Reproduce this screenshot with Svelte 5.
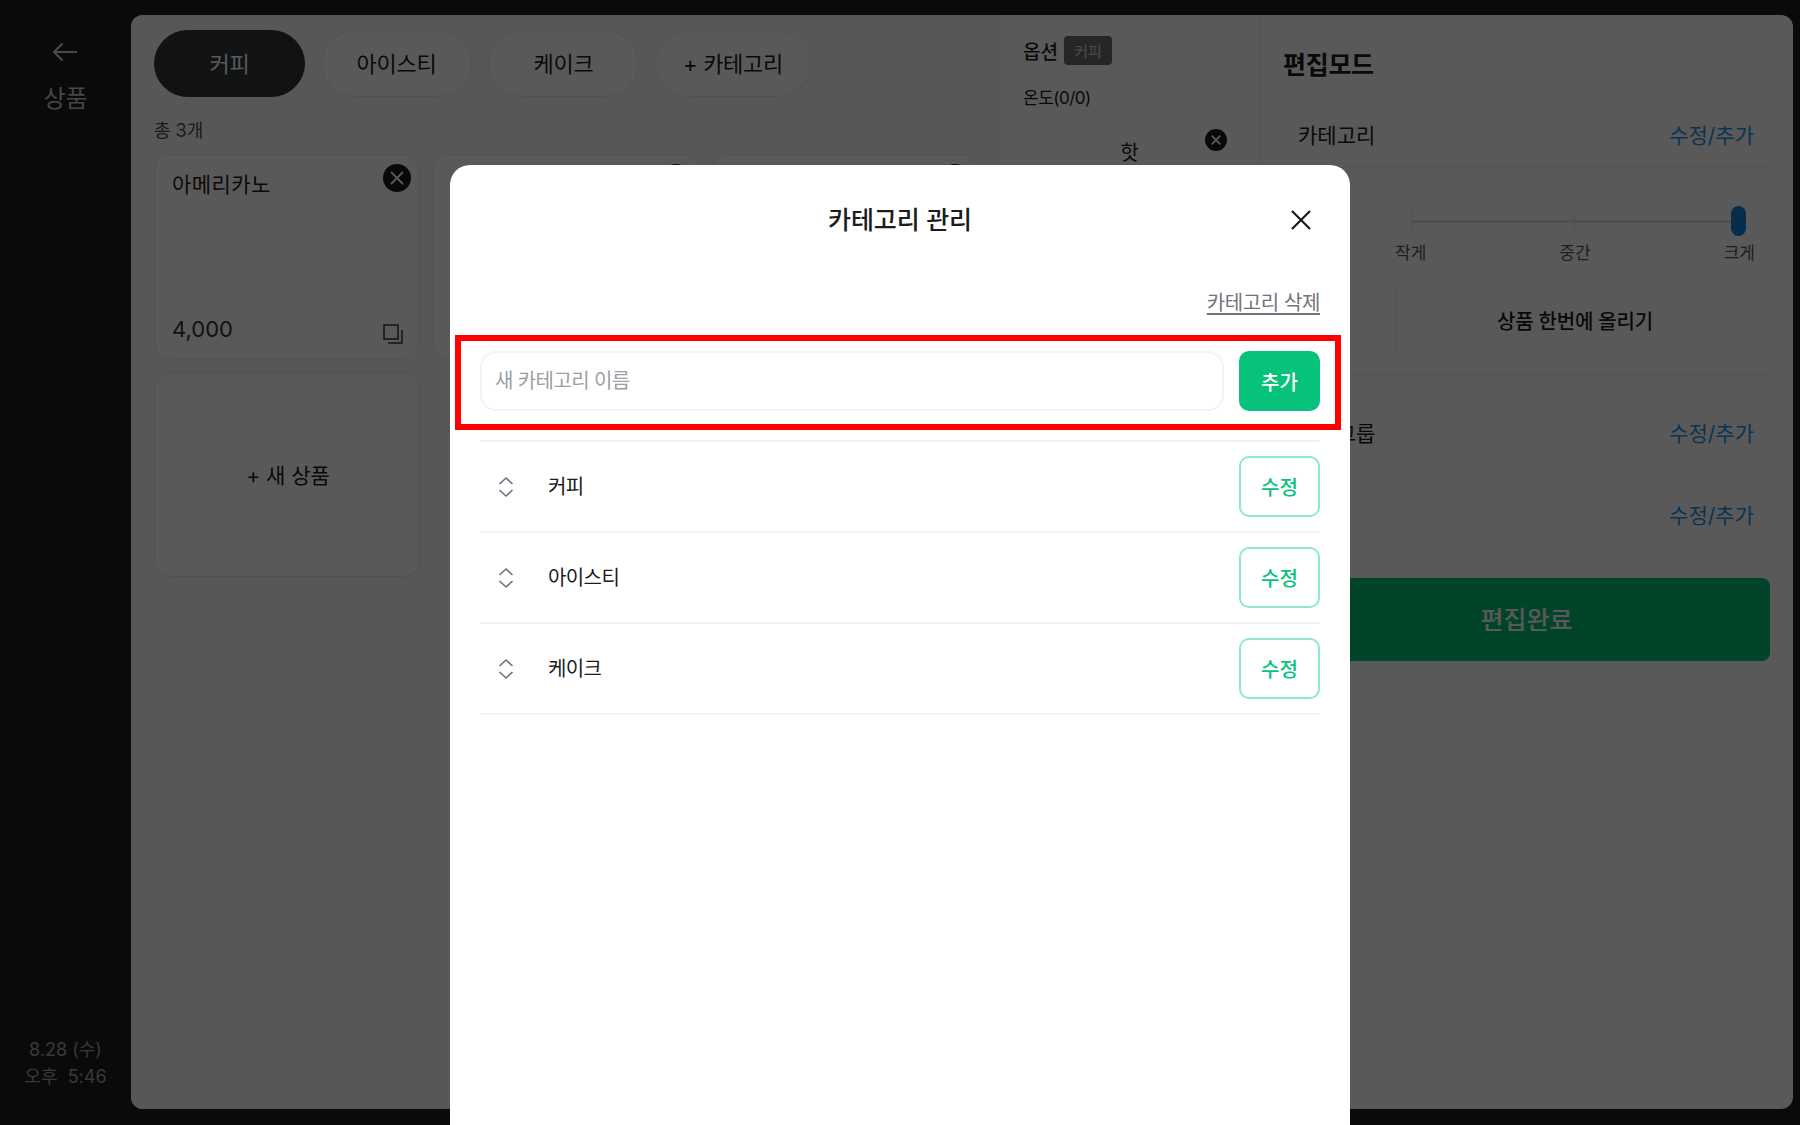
<script>
  const tabs = ['커피', '아이스티', '케이크', '+ 카테고리'];
  const categories = ['커피', '아이스티', '케이크'];
  const peeks = [0, 1, 2];
</script>

<div class="screen">
  <aside class="sidebar">
    <div class="side-top">
      <svg class="back" width="26" height="20" viewBox="0 0 26 20" fill="none" stroke="currentColor" stroke-width="2">
        <path d="M25 10H2M10.5 1.5 2 10l8.500 8.500" />
      </svg>
      <span class="side-title">상품</span>
    </div>
    <div class="clock">
      <span>8.28 (수)</span>
      <span>오후&nbsp; 5:46</span>
    </div>
  </aside>

  <main class="panel">
    <section class="products">
      <div class="tabs">
        {#each tabs as tab, i}
          <button class="tab" class:active={i === 0}>{tab}</button>
        {/each}
      </div>
      <p class="count">총 3개</p>
      <div class="grid">
        {#each peeks as p}
          <div class="card">
            <div class="card-name">{p === 0 ? '아메리카노' : ''}</div>
            <span class="remove">
              <svg width="16" height="16" viewBox="0 0 16 16" stroke="currentColor" stroke-width="1.800"><path d="M2 2l12 12M14 2 2 14" /></svg>
            </span>
            <div class="card-foot">
              <span>{p === 0 ? '4,000' : ''}</span>
              <svg width="22" height="22" viewBox="0 0 22 22" fill="none" stroke="currentColor" stroke-width="1.500">
                <path d="M2 2h14v14H2z" /><path d="M20 7v13H6" />
              </svg>
            </div>
          </div>
        {/each}
        <div class="card new-card">+ 새 상품</div>
      </div>
    </section>

    <section class="options">
      <div class="opt-head">
        <span>옵션</span><span class="tag">커피</span>
      </div>
      <p class="opt-sub">온도(0/0)</p>
      <div class="opt-item">
        <span>핫</span>
        <span class="remove small">
          <svg width="12" height="12" viewBox="0 0 14 14" stroke="currentColor" stroke-width="2"><path d="M2 2l10 10M12 2 2 12" /></svg>
        </span>
      </div>
    </section>

    <section class="edit">
      <h2>편집모드</h2>
      <div class="edit-row first"><span>카테고리</span><span class="link">수정/추가</span></div>
      <div class="size-box">
        <div class="slider">
          <i class="tick"></i><i class="tick"></i><i class="tick end"></i>
          <b class="thumb"></b>
        </div>
        <div class="size-labels"><span>작게</span><span>중간</span><span>크게</span></div>
        <div class="bulk">상품 한번에 올리기</div>
      </div>
      <div class="edit-row group"><span>옵션그룹</span><span class="link">수정/추가</span></div>
      <div class="edit-row"><span>옵션</span><span class="link">수정/추가</span></div>
      <button class="done">편집완료</button>
    </section>
  </main>

  <div class="overlay"></div>

  <div class="modal">
    <header class="modal-head">
      <h1>카테고리 관리</h1>
      <svg class="close" width="22" height="22" viewBox="0 0 22 22" stroke="#1a1a1a" stroke-width="2.200"><path d="M2 2l18 18M20 2 2 20" /></svg>
    </header>
    <div class="delete-row"><a href="#top">카테고리 삭제</a></div>
    <div class="highlight">
      <div class="add-row">
        <div class="name-input">새 카테고리 이름</div>
        <button class="btn solid">추가</button>
      </div>
    </div>
    <ul class="cat-list">
      {#each categories as cat}
        <li>
          <svg width="16" height="22" viewBox="0 0 16 22" fill="none" stroke="#6b7280" stroke-width="1.600">
            <path d="M1.500 8 8 2l6.500 6M1.500 14 8 20l6.500-6" />
          </svg>
          <span class="cat-name">{cat}</span>
          <button class="btn outline">수정</button>
        </li>
      {/each}
    </ul>
  </div>
</div>

<style>
  :global(body) {
    margin: 0;
    background: #1d1d1d;
  }

  .screen {
    position: relative;
    display: flex;
    width: 1800px;
    height: 1125px;
    overflow: hidden;
    background: #1d1d1d;
    font-family: Inter, "Noto Sans CJK KR", "Noto Sans", sans-serif;
    color: #1a1c20;
  }

  button {
    font-family: inherit;
  }

  .sidebar {
    width: 131px;
    flex: none;
    display: flex;
    flex-direction: column;
    justify-content: space-between;
    align-items: center;
    padding: 42px 0 35px;
    box-sizing: border-box;
    color: #d4d4d4;
  }

  .side-top {
    display: flex;
    flex-direction: column;
    align-items: center;
    gap: 19px;
  }

  .side-title {
    font-size: 24px;
    line-height: 36px;
    color: #c8c8c8;
  }

  .clock {
    display: flex;
    flex-direction: column;
    align-items: center;
    font-size: 18px;
    line-height: 27px;
    color: #a3a3a3;
  }

  .panel {
    display: flex;
    width: 1662px;
    height: 1094px;
    margin-top: 15px;
    background: #fff;
    border-radius: 12px;
    overflow: hidden;
  }

  .products {
    width: 868px;
    flex: none;
    box-sizing: border-box;
    padding: 15px 23px;
    background: #fafafa;
  }

  .tabs {
    display: flex;
    gap: 16px;
  }

  .tab {
    height: 67px;
    min-width: 151px;
    padding: 0 27px 3px;
    border: 1px solid #e9e9ea;
    border-radius: 34px;
    background: #fff;
    font-size: 22px;
    font-weight: 400;
    letter-spacing: -0.3px;
    color: #1a1c20;
  }

  .tab.active {
    background: #313438;
    border-color: #313438;
    color: #fff;
  }

  .count {
    margin: 20px 0 9px;
    font-size: 18px;
    line-height: 28px;
    color: #4a4d52;
  }

  .grid {
    display: grid;
    grid-template-columns: repeat(3, 266px);
    grid-auto-rows: 205px;
    gap: 13px;
  }

  .card {
    position: relative;
    display: flex;
    flex-direction: column;
    justify-content: space-between;
    box-sizing: border-box;
    padding: 14px 15px 13px 17px;
    background: #fff;
    border: 1px solid #e9e9ea;
    border-radius: 16px;
  }

  .card-name {
    font-size: 21px;
    line-height: 32px;
    letter-spacing: 0.4px;
  }

  .card-foot {
    display: flex;
    justify-content: space-between;
    align-items: flex-end;
    height: 32px;
    font-size: 22px;
    line-height: 32px;
    color: #33363b;
  }

  .remove {
    position: absolute;
    top: 9px;
    right: 8px;
    width: 28px;
    height: 28px;
    display: flex;
    align-items: center;
    justify-content: center;
    border-radius: 50%;
    background: #1a1a1a;
    color: #fff;
  }

  .new-card {
    align-items: center;
    justify-content: center;
    padding-bottom: 16px;
    font-size: 21px;
  }

  .options {
    width: 261px;
    flex: none;
    box-sizing: border-box;
    padding: 21px 23px;
    background: #fff;
    border-left: 1px solid #efefef;
    border-right: 1px solid #efefef;
  }

  .opt-head {
    display: flex;
    align-items: center;
    gap: 6px;
    font-size: 19px;
    font-weight: 500;
  }

  .tag {
    display: flex;
    align-items: center;
    justify-content: center;
    width: 48px;
    height: 29px;
    border-radius: 4px;
    background: #6a6d73;
    color: #d4d4d4;
    font-size: 15px;
    font-weight: 400;
  }

  .opt-sub {
    margin: 20px 0 0;
    font-size: 17px;
    line-height: 26px;
    letter-spacing: -0.5px;
  }

  .opt-item {
    position: relative;
    margin-top: 26px;
    text-align: center;
    font-size: 20px;
    line-height: 32px;
  }

  .remove.small {
    top: -8px;
    right: 9px;
    width: 22px;
    height: 22px;
  }

  .edit {
    flex: 1;
    min-width: 0;
    box-sizing: border-box;
    padding: 33px 23px 0 23px;
  }

  .edit h2 {
    margin: 0;
    height: 52px;
    font-size: 25px;
    line-height: 34px;
    font-weight: 700;
    letter-spacing: -0.3px;
    border-bottom: 1px solid #f3f3f3;
  }

  .edit-row {
    display: flex;
    justify-content: space-between;
    align-items: center;
    height: 66px;
    padding: 0 16px 0 15px;
    font-size: 21px;
    border-bottom: 1px solid #f0f0f0;
    margin-top: 15px;
  }

  .edit-row.first {
    margin-top: 0;
  }

  .edit-row.group {
    margin-top: 23px;
  }

  .link {
    color: #1e94e8;
  }

  .size-box {
    margin-top: 15px;
    padding: 23px 15px 20px 112px;
    border-bottom: 1px solid #f0f0f0;
  }

  .slider {
    position: relative;
    display: flex;
    justify-content: space-between;
    align-items: center;
    height: 30px;
    margin: 0 17px 0 16px;
    background: linear-gradient(#e6e6e6, #e6e6e6) center / 100% 3px no-repeat;
  }

  .tick {
    width: 1px;
    height: 16px;
    background: #e0e0e0;
  }

  .thumb {
    position: absolute;
    right: -8px;
    top: 0;
    width: 15px;
    height: 30px;
    border-radius: 8px;
    background: #1280d8;
  }

  .size-labels {
    display: flex;
    justify-content: space-between;
    margin-top: 4px;
    font-size: 17px;
    line-height: 26px;
    color: #55585e;
  }

  .bulk {
    display: flex;
    align-items: center;
    justify-content: center;
    height: 68px;
    margin-top: 19px;
    border: 1px solid #f0f0f0;
    font-size: 20px;
    font-weight: 500;
    letter-spacing: -0.2px;
  }

  .done {
    display: block;
    width: 100%;
    height: 83px;
    margin-top: 30px;
    padding-bottom: 4px;
    border: 0;
    border-radius: 8px;
    background: #07c27a;
    color: #fff;
    font-size: 25px;
    font-weight: 500;
  }

  .overlay {
    position: absolute;
    inset: 0;
    background: rgba(0, 0, 0, 0.65);
  }

  .modal {
    position: absolute;
    left: 450px;
    top: 165px;
    width: 900px;
    height: 1000px;
    box-sizing: border-box;
    padding: 0 30px;
    background: #fff;
    border-radius: 20px;
  }

  .modal-head {
    position: relative;
    display: flex;
    justify-content: center;
    align-items: center;
    box-sizing: border-box;
    height: 108px;
    padding-bottom: 2px;
  }

  .modal-head h1 {
    margin: 0;
    font-size: 25px;
    font-weight: 500;
    letter-spacing: -0.1px;
    color: #1a1c20;
  }

  .close {
    position: absolute;
    right: 8px;
    top: 44px;
  }

  .delete-row {
    display: flex;
    justify-content: flex-end;
    height: 62px;
    padding-top: 14px;
    box-sizing: border-box;
    font-size: 20px;
    line-height: 32px;
    letter-spacing: -0.4px;
  }

  .delete-row a {
    color: #71747a;
    text-decoration: underline;
    text-underline-offset: 3px;
  }

  .highlight {
    margin: 0 -21px 0 -25px;
    height: 95px;
    box-sizing: border-box;
    border: 6px solid #ff0000;
    padding: 10px 15px 0 19px;
  }

  .add-row {
    display: flex;
    gap: 15px;
  }

  .name-input {
    flex: 1;
    height: 60px;
    box-sizing: border-box;
    padding-left: 13px;
    border: 2px solid #f3f3f3;
    border-radius: 16px;
    font-size: 20px;
    line-height: 56px;
    letter-spacing: -0.6px;
    color: #9aa0a6;
  }

  .btn {
    width: 81px;
    height: 60px;
    flex: none;
    box-sizing: border-box;
    border-radius: 10px;
    font-size: 20px;
    font-weight: 500;
  }

  .btn.solid {
    border: 0;
    background: #07c27a;
    color: #fff;
  }

  .btn.outline {
    height: 61px;
    margin-top: -1px;
    border: 2px solid #8aebc6;
    background: #fff;
    color: #07c27a;
  }

  .cat-list {
    list-style: none;
    margin: 10px 0 0;
    padding: 0;
    border-top: 2px solid #f3f3f3;
  }

  .cat-list li {
    display: flex;
    align-items: center;
    height: 91px;
    box-sizing: border-box;
    padding: 0 0 0 18px;
    border-bottom: 2px solid #f3f3f3;
  }

  .cat-name {
    flex: 1;
    margin-left: 34px;
    padding-bottom: 2px;
    font-size: 20px;
    letter-spacing: -0.6px;
  }
</style>
